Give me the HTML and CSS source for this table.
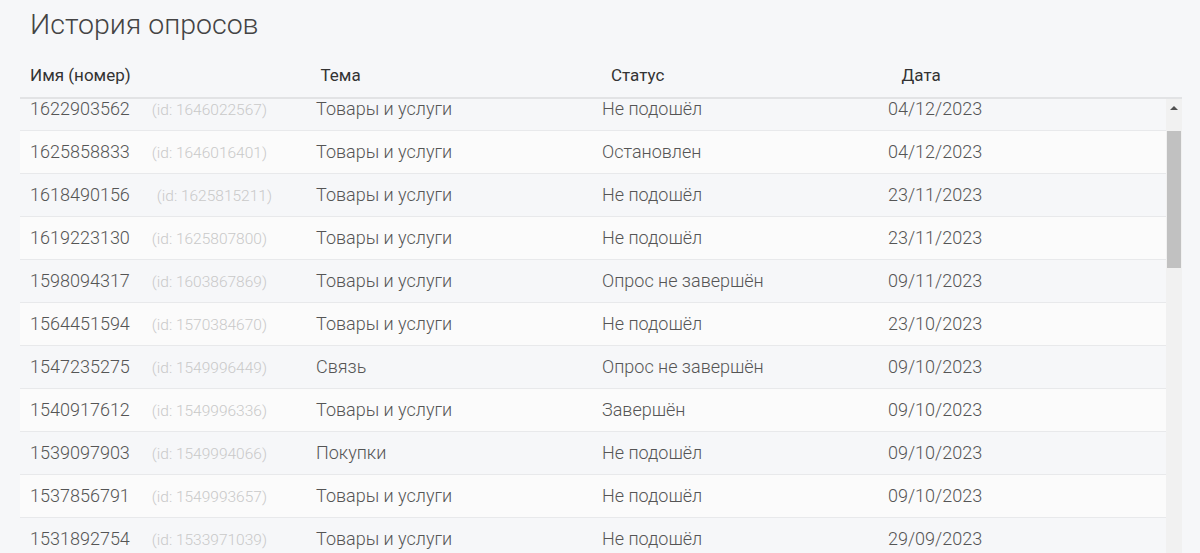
FILE: index.html
```html
<!DOCTYPE html>
<html lang="ru">
<head>
<meta charset="utf-8">
<title>История опросов</title>
<link rel="stylesheet" href="styles.css">
</head>
<body>
<div class="page">
  <h1 class="title">История опросов</h1>
  <div class="table">
    <div class="thead">
      <div class="th">Имя (номер)</div>
      <div class="th">Тема</div>
      <div class="th">Статус</div>
      <div class="th">Дата</div>
    </div>
    <div class="tbody-wrap">
      <div class="viewport">
        <div class="rows">
          <div class="row"><div class="cell">1622903562<span class="id">(id: 1646022567)</span></div><div class="cell">Товары и услуги</div><div class="cell">Не подошёл</div><div class="cell">04/12/2023</div></div>
          <div class="row"><div class="cell">1625858833<span class="id">(id: 1646016401)</span></div><div class="cell">Товары и услуги</div><div class="cell">Остановлен</div><div class="cell">04/12/2023</div></div>
          <div class="row"><div class="cell">1618490156<span class="id id-wide">(id: 1625815211)</span></div><div class="cell">Товары и услуги</div><div class="cell">Не подошёл</div><div class="cell">23/11/2023</div></div>
          <div class="row"><div class="cell">1619223130<span class="id">(id: 1625807800)</span></div><div class="cell">Товары и услуги</div><div class="cell">Не подошёл</div><div class="cell">23/11/2023</div></div>
          <div class="row"><div class="cell">1598094317<span class="id">(id: 1603867869)</span></div><div class="cell">Товары и услуги</div><div class="cell">Опрос не завершён</div><div class="cell">09/11/2023</div></div>
          <div class="row"><div class="cell">1564451594<span class="id">(id: 1570384670)</span></div><div class="cell">Товары и услуги</div><div class="cell">Не подошёл</div><div class="cell">23/10/2023</div></div>
          <div class="row"><div class="cell">1547235275<span class="id">(id: 1549996449)</span></div><div class="cell">Связь</div><div class="cell">Опрос не завершён</div><div class="cell">09/10/2023</div></div>
          <div class="row"><div class="cell">1540917612<span class="id">(id: 1549996336)</span></div><div class="cell">Товары и услуги</div><div class="cell">Завершён</div><div class="cell">09/10/2023</div></div>
          <div class="row"><div class="cell">1539097903<span class="id">(id: 1549994066)</span></div><div class="cell">Покупки</div><div class="cell">Не подошёл</div><div class="cell">09/10/2023</div></div>
          <div class="row"><div class="cell">1537856791<span class="id">(id: 1549993657)</span></div><div class="cell">Товары и услуги</div><div class="cell">Не подошёл</div><div class="cell">09/10/2023</div></div>
          <div class="row"><div class="cell">1531892754<span class="id">(id: 1533971039)</span></div><div class="cell">Товары и услуги</div><div class="cell">Не подошёл</div><div class="cell">29/09/2023</div></div>
        </div>
      </div>
      <div class="scrollbar">
        <div class="sb-button"><span class="sb-arrow"></span></div>
        <div class="sb-gap"></div>
        <div class="sb-thumb"></div>
      </div>
    </div>
  </div>
</div>
</body>
</html>
```

FILE: styles.css
```css
html, body {
  margin: 0;
  padding: 0;
  height: 100%;
  overflow: hidden;
}

body {
  background: #f6f7f9;
  font-family: Roboto, "Noto Sans", "Liberation Sans", sans-serif;
  color: #555;
}

.page {
  padding: 0 18px 0 20px;
}

.title {
  margin: 0;
  padding: 0 10px;
  font-size: 28.5px;
  line-height: 50px;
  font-weight: 300;
  color: #444;
}

.thead {
  display: grid;
  grid-template-columns: repeat(4, 1fr);
  padding-top: 4px;
  border-bottom: 2px solid #e2e3e5;
}

.th {
  padding: 0 10px;
  line-height: 43px;
  font-size: 17px;
  font-weight: 400;
  color: #333;
}

.tbody-wrap {
  display: flex;
  height: 460px;
}

.viewport {
  flex: 1;
  overflow: hidden;
}

.rows {
  margin-top: -11px;
}

.row {
  display: grid;
  grid-template-columns: repeat(4, 286px) 1fr;
  border-bottom: 1px solid #e8e9eb;
}

.row:nth-child(even) {
  background: #fbfbfb;
}

.cell {
  height: 42px;
  padding: 0 10px;
  line-height: 42px;
  font-size: 18px;
  font-weight: 300;
  color: #555;
  white-space: nowrap;
  overflow: hidden;
}

.id {
  margin-left: 22px;
  font-size: 15.5px;
  color: #c9c9c9;
}

.id-wide {
  margin-left: 27px;
}

.scrollbar {
  width: 16px;
  background: #f1f1f1;
  display: flex;
  flex-direction: column;
  align-items: center;
}

.sb-button {
  height: 18px;
  width: 16px;
  display: flex;
  align-items: center;
  justify-content: center;
}

.sb-arrow {
  width: 0;
  height: 0;
  border-left: 4px solid transparent;
  border-right: 4px solid transparent;
  border-bottom: 4px solid #505050;
}

.sb-gap {
  height: 14px;
}

.sb-thumb {
  width: 14px;
  height: 137px;
  background: #c1c1c1;
}
```
